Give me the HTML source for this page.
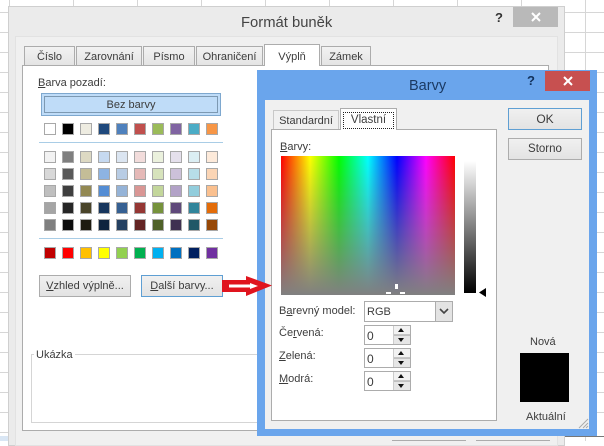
<!DOCTYPE html>
<html lang="cs"><head><meta charset="utf-8"><title>Formát buněk</title>
<style>
html,body{margin:0;padding:0}
body{width:604px;height:441px;position:relative;overflow:hidden;background:#fff;font:11px "Liberation Sans",sans-serif;color:#3c3c3c}
.a,.t,.tab,.btn,.s{position:absolute;box-sizing:border-box}
.t{white-space:nowrap;line-height:14px}
u{text-decoration:underline}
.tab{background:linear-gradient(#f2f2f2,#e4e4e4);border:1px solid #acacac;border-bottom:0;text-align:center;line-height:21px;font-size:11px;top:46px;height:19px}
.tab.on{background:#fff;top:44px;height:22px;line-height:24px;z-index:2}
.btn{background:linear-gradient(#f0f0f0,#e3e3e3);border:1px solid #acacac;text-align:center;font-size:11px;line-height:21px}
.blue{border-color:#5f9fd3}
.s{width:12px;height:12px;border:1px solid #a8a8a8}
.spin{position:absolute;left:364px;width:47px;height:20px;background:#fff;border:1px solid #acacac;box-sizing:border-box;padding-left:2px;line-height:20px;font-size:12px}
.spin i{position:absolute;right:0;top:0;width:16px;height:18px;background:linear-gradient(#f2f2f2 47%,#999 47%,#999 53%,#e6e6e6 53%);border-left:1px solid #ccc}
.spin i:before,.spin i:after{content:"";position:absolute;left:4px;border:3.5px solid transparent}
.spin i:before{top:-1px;border-bottom:4px solid #111}
.spin i:after{bottom:-1px;border-top:4px solid #111}
</style></head><body>
<svg class="a" style="left:0;top:0" width="604" height="441"><g stroke="#d6d6d6" fill="none"><path d="M9.5 0V441M73.500 0V8M137.5 0V8M201.5 0V8M265.5 0V8M329.5 0V8M393.5 0V8M457.5 0V8M521.5 0V8M585.5 0V441M0 12.5H8M0 32.5H8M0 52.5H8M0 72.5H8M0 92.5H8M0 112.5H8M0 132.5H8M0 152.5H8M0 172.5H8M0 192.5H8M0 212.5H8M0 232.5H8M0 252.5H8M0 272.5H8M0 292.5H8M0 312.5H8M0 332.5H8M0 352.5H8M0 372.5H8M0 392.5H8M0 412.5H8M0 432.5H8M564 12.5H604M564 32.5H604M564 52.5H604M597 72.5H604M597 92.5H604M597 112.5H604M597 132.5H604M597 152.5H604M597 172.5H604M597 192.5H604M597 212.5H604M597 232.5H604M597 252.5H604M597 272.5H604M597 292.5H604M597 312.5H604M597 332.5H604M597 352.5H604M597 372.5H604M597 392.5H604M597 412.5H604"/></g></svg>
<div class="a" style="left:0;top:436px;width:8px;height:5px;background:#d9e6f4"></div>

<!-- Format cells dialog -->
<div class="a" style="left:8px;top:6px;width:557px;height:440px;background:#ebebeb;border:1px solid #cfcfcf"></div>
<div class="a" style="left:15px;top:36px;width:543px;height:410px;background:#f0f0f0;border:1px solid #e2e2e2"></div>
<div class="t" style="left:241px;top:14px;font-size:14.8px;line-height:18px;color:#444">Formát buněk</div>
<div class="t" style="left:495px;top:11px;font-size:13px;font-weight:bold;color:#333">?</div>
<div class="a" style="left:513px;top:7px;width:45px;height:20px;background:#b9b9b9"></div>
<svg class="a" style="left:531px;top:12px" width="10" height="10"><path d="M1 1 9 9M9 1 1 9" stroke="#fff" stroke-width="2"/></svg>

<div class="a" style="left:22px;top:65px;width:527px;height:366px;background:#fff;border:1px solid #acacac"></div>
<div class="tab" style="left:24px;width:51px">Číslo</div>
<div class="tab" style="left:76px;width:66px">Zarovnání</div>
<div class="tab" style="left:143px;width:52px">Písmo</div>
<div class="tab" style="left:196px;width:67px">Ohraničení</div>
<div class="tab on" style="left:264px;width:56px">Výplň</div>
<div class="tab" style="left:321px;width:50px">Zámek</div>

<div class="t" style="left:38px;top:76px"><u>B</u>arva pozadí:</div>
<div class="a" style="left:41px;top:93px;width:180px;height:23px;background:#bfdcf8;border:1px solid #7ea8cf;box-shadow:inset 0 0 0 2px #bfdcf8,inset 0 0 0 3px #7d99b2;text-align:center;line-height:23px;font-size:11px;box-sizing:border-box">Bez barvy</div>

<div class="s" style="left:44px;top:123px;background:#fff"></div><div class="s" style="left:62px;top:123px;background:#000"></div><div class="s" style="left:80px;top:123px;background:#eeece1"></div><div class="s" style="left:98px;top:123px;background:#1f497d"></div><div class="s" style="left:116px;top:123px;background:#4f81bd"></div><div class="s" style="left:134px;top:123px;background:#c0504d"></div><div class="s" style="left:152px;top:123px;background:#9bbb59"></div><div class="s" style="left:170px;top:123px;background:#8064a2"></div><div class="s" style="left:188px;top:123px;background:#4bacc6"></div><div class="s" style="left:206px;top:123px;background:#f79646"></div>
<div class="a" style="left:39px;top:142px;width:184px;height:1px;background:#a9cde6"></div>
<div class="s" style="left:44px;top:151px;background:#f2f2f2"></div><div class="s" style="left:62px;top:151px;background:#7f7f7f"></div><div class="s" style="left:80px;top:151px;background:#ddd9c3"></div><div class="s" style="left:98px;top:151px;background:#c6d9f0"></div><div class="s" style="left:116px;top:151px;background:#dbe5f1"></div><div class="s" style="left:134px;top:151px;background:#f2dcdb"></div><div class="s" style="left:152px;top:151px;background:#ebf1dd"></div><div class="s" style="left:170px;top:151px;background:#e5e0ec"></div><div class="s" style="left:188px;top:151px;background:#dbeef3"></div><div class="s" style="left:206px;top:151px;background:#fdeada"></div>
<div class="s" style="left:44px;top:168px;background:#d8d8d8"></div><div class="s" style="left:62px;top:168px;background:#595959"></div><div class="s" style="left:80px;top:168px;background:#c4bd97"></div><div class="s" style="left:98px;top:168px;background:#8db3e2"></div><div class="s" style="left:116px;top:168px;background:#b8cce4"></div><div class="s" style="left:134px;top:168px;background:#e5b9b7"></div><div class="s" style="left:152px;top:168px;background:#d7e3bc"></div><div class="s" style="left:170px;top:168px;background:#ccc1d9"></div><div class="s" style="left:188px;top:168px;background:#b7dde8"></div><div class="s" style="left:206px;top:168px;background:#fbd5b5"></div>
<div class="s" style="left:44px;top:185px;background:#bfbfbf"></div><div class="s" style="left:62px;top:185px;background:#3f3f3f"></div><div class="s" style="left:80px;top:185px;background:#938953"></div><div class="s" style="left:98px;top:185px;background:#548dd4"></div><div class="s" style="left:116px;top:185px;background:#95b3d7"></div><div class="s" style="left:134px;top:185px;background:#d99694"></div><div class="s" style="left:152px;top:185px;background:#c3d69b"></div><div class="s" style="left:170px;top:185px;background:#b2a2c7"></div><div class="s" style="left:188px;top:185px;background:#92cddc"></div><div class="s" style="left:206px;top:185px;background:#fac08f"></div>
<div class="s" style="left:44px;top:202px;background:#a5a5a5"></div><div class="s" style="left:62px;top:202px;background:#262626"></div><div class="s" style="left:80px;top:202px;background:#494429"></div><div class="s" style="left:98px;top:202px;background:#17365d"></div><div class="s" style="left:116px;top:202px;background:#366092"></div><div class="s" style="left:134px;top:202px;background:#953734"></div><div class="s" style="left:152px;top:202px;background:#76923c"></div><div class="s" style="left:170px;top:202px;background:#5f497a"></div><div class="s" style="left:188px;top:202px;background:#31859b"></div><div class="s" style="left:206px;top:202px;background:#e36c09"></div>
<div class="s" style="left:44px;top:219px;background:#7f7f7f"></div><div class="s" style="left:62px;top:219px;background:#0c0c0c"></div><div class="s" style="left:80px;top:219px;background:#1d1b10"></div><div class="s" style="left:98px;top:219px;background:#0f243e"></div><div class="s" style="left:116px;top:219px;background:#244061"></div><div class="s" style="left:134px;top:219px;background:#632423"></div><div class="s" style="left:152px;top:219px;background:#4f6128"></div><div class="s" style="left:170px;top:219px;background:#3f3151"></div><div class="s" style="left:188px;top:219px;background:#205867"></div><div class="s" style="left:206px;top:219px;background:#974806"></div>
<div class="a" style="left:39px;top:238px;width:184px;height:1px;background:#a9cde6"></div>
<div class="s" style="left:44px;top:247px;background:#c00000"></div><div class="s" style="left:62px;top:247px;background:#ff0000"></div><div class="s" style="left:80px;top:247px;background:#ffc000"></div><div class="s" style="left:98px;top:247px;background:#ffff00"></div><div class="s" style="left:116px;top:247px;background:#92d050"></div><div class="s" style="left:134px;top:247px;background:#00b050"></div><div class="s" style="left:152px;top:247px;background:#00b0f0"></div><div class="s" style="left:170px;top:247px;background:#0070c0"></div><div class="s" style="left:188px;top:247px;background:#002060"></div><div class="s" style="left:206px;top:247px;background:#7030a0"></div>

<div class="btn" style="left:39px;top:275px;width:92px;height:22px"><u>V</u>zhled výplně...</div>
<div class="btn blue" style="left:141px;top:275px;width:82px;height:22px"><u>D</u>alší barvy...</div>

<div class="a" style="left:31px;top:354px;width:240px;height:69px;border:1px solid #d5d5d5"></div>
<div class="t" style="left:34px;top:348px;background:#fff;padding:0 2px">Ukázka</div>

<!-- Colors dialog -->
<div class="a" style="left:257px;top:70px;width:340px;height:366px;background:#6aa5ec"></div>
<div class="a" style="left:265px;top:100px;width:324px;height:329px;background:#f0f0f0"></div>
<div class="t" style="left:409px;top:77px;font-size:14.500px;line-height:18px;color:#1b3a63">Barvy</div>
<div class="t" style="left:527px;top:74px;font-size:13px;font-weight:bold;color:#12315c">?</div>
<div class="a" style="left:545px;top:71px;width:45px;height:20px;background:#c75050"></div>
<svg class="a" style="left:563px;top:76px" width="10" height="10"><path d="M1 1 9 9M9 1 1 9" stroke="#fff" stroke-width="2"/></svg>

<div class="a" style="left:271px;top:129px;width:226px;height:292px;background:#fff;border:1px solid #acacac"></div>
<div class="a" style="left:273px;top:110px;width:66px;height:19px;background:#f0f0f0;border:1px solid #c8c8c8;border-bottom:0;text-align:center;line-height:21px;font-size:11px;box-sizing:border-box">Standardní</div>
<div class="a" style="left:340px;top:108px;width:57px;height:22px;background:#fff;border:1px solid #acacac;border-bottom:0;box-sizing:border-box"><div style="margin:3px 2px 0;height:15px;border:1px dotted #222;text-align:center;line-height:15px;font-size:11.5px">Vlastní</div></div>
<div class="btn blue" style="left:508px;top:108px;width:74px;height:22px;font-size:12px">OK</div>
<div class="btn" style="left:508px;top:138px;width:74px;height:22px;font-size:11.500px">Storno</div>

<div class="t" style="left:280px;top:140px"><u>B</u>arvy:</div>
<div class="a" style="left:281px;top:156px;width:174px;height:139px;background:linear-gradient(rgba(128,128,128,0),rgba(128,128,128,1)),linear-gradient(90deg,#f00,#ff0 16.67%,#0f0 33.33%,#0ff 50%,#00f 66.67%,#f0f 83.33%,#f00)"></div>
<svg class="a" style="left:386px;top:283px" width="20" height="12"><path d="M9 1h3v5H9zM0 9h5v2H0zM14 9h5v2h-5z" fill="#fff"/></svg>
<div class="a" style="left:464px;top:161px;width:12px;height:132px;background:linear-gradient(#fff,#000)"></div>
<svg class="a" style="left:479px;top:288px" width="8" height="10"><path d="M7 0V9L0 4.5Z" fill="#000"/></svg>

<div class="t" style="left:279px;top:304px">B<u>a</u>revný model:</div>
<div class="a" style="left:364px;top:301px;width:89px;height:21px;background:#fff;border:1px solid #acacac;box-sizing:border-box;padding-left:2px;line-height:20px;font-size:11px">RGB<span class="a" style="right:0;top:0;width:17px;height:19px;background:#e3e3e3;border-left:1px solid #acacac;box-sizing:border-box"><svg class="a" style="left:3px;top:6px" width="10" height="7"><path d="M1 1l4 4 4-4" stroke="#444" stroke-width="1.6" fill="none"/></svg></span></div>
<div class="t" style="left:279px;top:326px">Če<u>r</u>vená:</div>
<div class="t" style="left:279px;top:349px"><u>Z</u>elená:</div>
<div class="t" style="left:279px;top:372px"><u>M</u>odrá:</div>
<div class="spin" style="top:325px">0<i></i></div>
<div class="spin" style="top:348px">0<i></i></div>
<div class="spin" style="top:371px">0<i></i></div>

<div class="t" style="left:530px;top:335px">Nová</div>
<div class="a" style="left:520px;top:353px;width:49px;height:49px;background:#000"></div>
<div class="t" style="left:526px;top:410px">Aktuální</div>
<svg class="a" style="left:578px;top:418px" width="11" height="11"><path d="M10 1 1 10M10 5 5 10M10 8 8 10" stroke="#aaa"/></svg>

<!-- Red arrow -->
<svg class="a" style="left:222px;top:275px" width="52" height="24"><path d="M0 5H24V1L50 10.500 24 21V17H0Z" fill="#e0141e"/><path d="M7 9.500H28V8L36 11 28 14V12.500H7Z" fill="#fff"/></svg>

<div class="a" style="left:392px;top:440px;width:74px;height:1px;background:#acacac"></div>
<div class="a" style="left:476px;top:440px;width:74px;height:1px;background:#acacac"></div>
<div class="a" style="left:565px;top:436px;width:39px;height:1px;background:#777"></div>
</body></html>
